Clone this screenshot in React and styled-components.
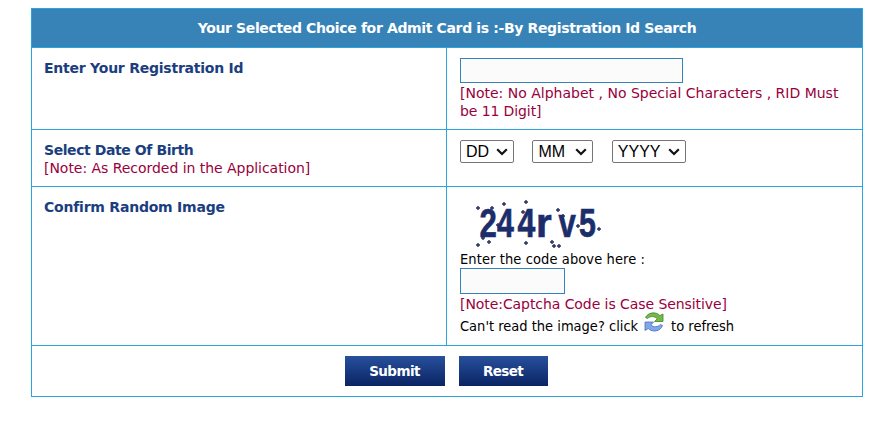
import React, { useState } from "react";
import styled, { createGlobalStyle } from "styled-components";

const GlobalStyle = createGlobalStyle`
  body {
    margin: 0;
    background: #fff;
    color: #000;
    font-family: "DejaVu Sans Condensed", "DejaVu Sans", sans-serif;
    font-stretch: condensed;
    font-size: 14.5px;
  }
  * {
    box-sizing: border-box;
  }
`;

const Form = styled.form`
  width: 832px;
  margin: 8px 0 0 31px;
  border: 1px solid #2ba5e0;
`;

const Header = styled.div`
  height: 38px;
  line-height: 39px;
  background: #3783b7;
  color: #fff;
  text-align: center;
  font-family: "DejaVu Sans", sans-serif;
  font-stretch: normal;
  font-size: 14px;
  font-weight: bold;
  letter-spacing: -0.36px;
  white-space: nowrap;
`;

const Row = styled.div`
  display: grid;
  grid-template-columns: 414px 1fr;
  height: ${props => props.height};
  border-top: 1px solid #2ba5e0;
`;

const LabelCell = styled.div`
  padding: 11px 12px 0;
`;

const FieldCell = styled.div`
  border-left: 1px solid #2ba5e0;
  padding: 10px 13px 0;
`;

const Label = styled.div`
  color: #1b3e80;
  font-family: "DejaVu Sans", sans-serif;
  font-stretch: normal;
  font-size: 14px;
  font-weight: bold;
  line-height: 18px;
  letter-spacing: ${props => props.spacing || "0"};
  white-space: nowrap;
`;

const Note = styled.div`
  color: #99003d;
  font-family: "DejaVu Sans", sans-serif;
  font-stretch: normal;
  font-size: 14px;
  line-height: 18px;
  letter-spacing: ${props => props.spacing || "0"};
  white-space: nowrap;
`;

const Input = styled.input`
  display: block;
  width: ${props => props.width};
  height: ${props => props.height || "25px"};
  margin-bottom: 1px;
  padding: 0 4px;
  border: 1px solid #3783b7;
  background: #fbfbfb;
`;

const Dates = styled.div`
  display: flex;
  gap: 18.4px;
`;

const SelectBox = styled.div`
  position: relative;
  width: ${props => props.width};
  height: 23px;
`;

const Select = styled.select`
  appearance: none;
  width: 100%;
  height: 23px;
  border: 1px solid #767676;
  border-radius: 2px;
  background: #fff;
  color: #000;
  padding: 0 0 0 5px;
  font-family: "Liberation Sans", Arial, sans-serif;
  font-size: 16px;
`;

const Chevron = styled.svg`
  position: absolute;
  top: 8px;
  right: 6px;
  width: 12px;
  height: 8px;
  pointer-events: none;
`;

const Captcha = styled.svg`
  display: block;
  width: 145px;
  height: 53px;
`;

const Text = styled.div`
  line-height: 18px;
  letter-spacing: ${props => props.spacing || "0"};
  white-space: nowrap;
`;

const RefreshLine = styled.div`
  display: flex;
  height: 24px;
  margin-top: -2px;
`;

const RefreshText = styled(Text)`
  padding-top: 6px;
`;

const RefreshIcon = styled.svg`
  width: 20px;
  height: 20px;
  margin: 1px 7px 0 6px;
  cursor: pointer;
`;

const Actions = styled.div`
  display: flex;
  justify-content: center;
  gap: 14px;
  height: 51px;
  padding: 10px 2px 0 0;
  border-top: 1px solid #2ba5e0;
`;

const Button = styled.button`
  width: ${props => props.width};
  height: 30px;
  padding: 0;
  border: 0;
  background: linear-gradient(#28509c, #0a2463);
  color: #fff;
  font-family: "DejaVu Sans", sans-serif;
  font-stretch: normal;
  font-size: 13.5px;
  font-weight: bold;
  letter-spacing: -0.6px;
`;

// character, x, horizontal scale
const glyphs = [
  ["2", 19.5, 0.76],
  ["4", 37, 0.74],
  ["4", 57.5, 0.78],
  ["r", 76, 0.98],
  ["v", 98.5, 0.76],
  ["5", 119, 0.74],
];

const specks = [
  [18, 11], [32, 11], [44, 7], [66, 5], [63, 15], [38, 28], [23, 41],
  [29, 45], [18, 48], [66, 46], [98, 13], [103, 19], [118, 29],
  [139, 32], [92, 45], [94, 49], [99, 49],
];

const CaptchaImage = () => (
  <Captcha viewBox="0 0 145 53" role="img">
    {glyphs.map(([ch, x, scale], i) => (
      <text
        key={i}
        transform={`translate(${x} 39.5) scale(${scale} 1)`}
        fontFamily="Liberation Sans"
        fontWeight="bold"
        fontSize="41"
        fill="#1c2d6b"
        stroke="#1c2d6b"
        strokeWidth=".7"
      >
        {ch}
      </text>
    ))}
    {specks.map(([x, y], i) => (
      <path key={i} d={`M${x - 2} ${y}h4M${x} ${y - 2}v4`} stroke="#25305c" strokeWidth="1.4" />
    ))}
  </Captcha>
);

const DateSelect = ({ label, width }) => (
  <SelectBox width={width}>
    <Select><option>{label}</option></Select>
    <Chevron viewBox="0 0 12 8">
      <path d="M1.2 1.3L6 6l4.8-4.7" fill="none" stroke="#111" strokeWidth="2.2" />
    </Chevron>
  </SelectBox>
);

const App = () => {
  const [rid, setRid] = useState("");
  const [code, setCode] = useState("");
  return (
    <>
      <GlobalStyle />
      <Form onSubmit={e => e.preventDefault()}>
        <Header>Your Selected Choice for Admit Card is :-By Registration Id Search</Header>
        <Row height="82px">
          <LabelCell>
            <Label spacing="-0.23px">Enter Your Registration Id</Label>
          </LabelCell>
          <FieldCell>
            <Input width="223px" value={rid} onChange={e => setRid(e.target.value)} />
            <Note>[Note: No Alphabet , No Special Characters , RID Must</Note>
            <Note spacing="-0.1px">be 11 Digit]</Note>
          </FieldCell>
        </Row>
        <Row height="57px">
          <LabelCell>
            <Label spacing="-0.42px">Select Date Of Birth</Label>
            <Note spacing="-0.04px">[Note: As Recorded in the Application]</Note>
          </LabelCell>
          <FieldCell>
            <Dates>
              <DateSelect width="54px" label="DD" />
              <DateSelect width="61px" label="MM" />
              <DateSelect width="74px" label="YYYY" />
            </Dates>
          </FieldCell>
        </Row>
        <Row height="159px">
          <LabelCell>
            <Label spacing="-0.22px">Confirm Random Image</Label>
          </LabelCell>
          <FieldCell>
            <CaptchaImage />
            <Text spacing="0.1px">Enter the code above here :</Text>
            <Input width="105px" height="26px" value={code} onChange={e => setCode(e.target.value)} />
            <Note spacing="-0.07px">[Note:Captcha Code is Case Sensitive]</Note>
            <RefreshLine>
              <RefreshText>Can't read the image? click</RefreshText>
              <RefreshIcon viewBox="0 0 20 20">
                <path d="M1.5 5.5C4 .3 12-.8 15.8 3.6L19 2v7.5h-8.5l2.8-2.7C10.5 4 6.5 3.7 3.5 6.5z" fill="#76b947" stroke="#42832c" strokeWidth=".8" />
                <path d="M18.5 13.5C16.5 19.5 8.5 20.8 4.3 16.5L1 18.5V10h8.5l-2.7 3c3 2.5 7 2.2 9.7-.5z" fill="#81a7e8" stroke="#486ec0" strokeWidth=".8" />
              </RefreshIcon>
              <RefreshText>to refresh</RefreshText>
            </RefreshLine>
          </FieldCell>
        </Row>
        <Actions>
          <Button width="100px">Submit</Button>
          <Button width="89px" type="reset">Reset</Button>
        </Actions>
      </Form>
    </>
  );
};

export default App;
